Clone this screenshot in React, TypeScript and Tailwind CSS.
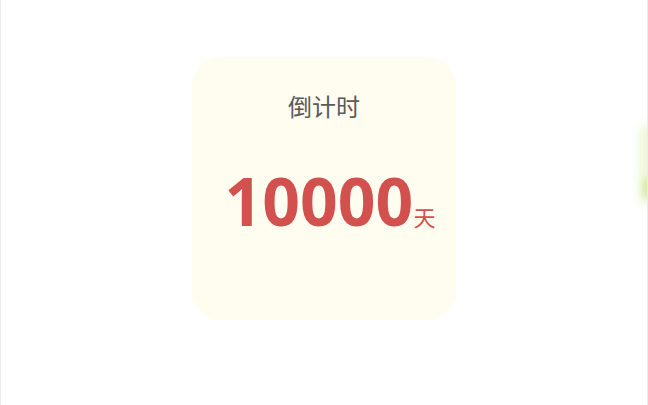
export default function App() {
  return (
    <div className="relative flex h-[405px] w-[648px] justify-center overflow-hidden border-x border-[#ececec] bg-white font-['Noto_Sans','Noto_Sans_CJK_SC',sans-serif]">
      {/* faint green glow at the right edge */}
      <div className="absolute right-[-8px] top-[125px] h-[80px] w-[14px] rounded-full bg-[#d4ec9a] opacity-50 blur-[6px]" />
      <div className="absolute right-[-4px] top-[178px] h-[20px] w-[8px] rounded-full bg-[#c4e37a] opacity-60 blur-[3px]" />

      <div className="mt-[57px] flex h-[263px] w-[264px] flex-col items-center rounded-[28px] bg-[#fffcf0]">
        <p className="mt-[35px] text-[24px] leading-[30px] text-[#5a5a5a]">倒计时</p>
        <div className="mt-[43px] flex items-baseline pl-[12px]">
          <span className="text-[66px] font-bold leading-[70px] text-[#d2514f]">10000</span>
          <span className="text-[22px] text-[#d2514f]">天</span>
        </div>
      </div>
    </div>
  )
}
